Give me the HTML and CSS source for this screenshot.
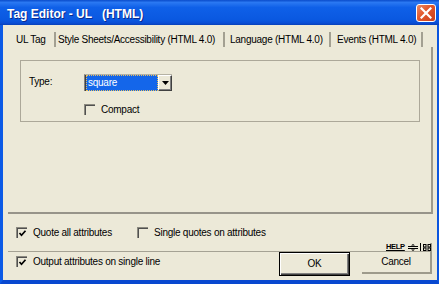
FILE: index.html
```html
<!DOCTYPE html>
<html>
<head>
<meta charset="utf-8">
<link rel="stylesheet" href="styles.css">
</head>
<body>
<div class="window">
  <div class="titlebar">
    <span class="title">Tag Editor - UL   (HTML)</span>
    <span class="close"><svg width="12" height="12" viewBox="0 0 12 12"><path d="M1.5 1.5 L10.5 10.5 M10.5 1.5 L1.5 10.5" stroke="#fff" stroke-width="2.2" stroke-linecap="square"/></svg></span>
  </div>
  <div class="frame">
    <div class="tabs">
      <span class="tab t1">UL Tag</span>
      <span class="tab t2">Style Sheets/Accessibility (HTML 4.0)</span>
      <span class="tab t3">Language (HTML 4.0)</span>
      <span class="tab t4">Events (HTML 4.0)</span>
    </div>
    <div class="panel">
      <div class="group">
        <div class="row1">
          <span class="label">Type:</span>
          <div class="select">
            <span class="field">square</span>
            <span class="ddbtn"><svg width="7" height="4" viewBox="0 0 7 4"><polygon points="0,0 7,0 3.5,4" fill="#000"/></svg></span>
          </div>
        </div>
        <div class="row2 chk">
          <span class="cb"></span><span>Compact</span>
        </div>
      </div>
    </div>
    <div class="opts">
      <div class="chk opt1"><span class="cb"><svg width="9" height="9" viewBox="0 0 9 9"><polyline points="1.5,4 3.5,6.2 7.5,1.8" fill="none" stroke="#000" stroke-width="1.7"/></svg></span><span>Quote all attributes</span></div>
      <div class="chk"><span class="cb"></span><span>Single quotes on attributes</span></div>
    </div>
    <div class="footer">
      <div class="helprow">
        <div class="hline"></div>
        <div class="help">
          <span class="helptext">HELP</span>
          <svg class="hicon" width="10" height="7" viewBox="0 0 10 7"><polygon points="5,0 3,1.5 7,1.5" fill="#000"/><rect x="0" y="2" width="10" height="1" fill="#000"/><rect x="0" y="4" width="10" height="1" fill="#000"/><polygon points="5,7 3,5.5 7,5.5" fill="#000"/></svg>
          <span class="gicon"><svg width="8" height="7" viewBox="0 0 8 7"><rect x="0.5" y="0.5" width="2.5" height="2.5" fill="none" stroke="#000" stroke-width="1"/><rect x="5" y="0.5" width="2.5" height="2.5" fill="none" stroke="#000" stroke-width="1"/><rect x="0.5" y="4" width="2.5" height="2.5" fill="none" stroke="#000" stroke-width="1"/><rect x="5" y="4" width="2.5" height="2.5" fill="none" stroke="#000" stroke-width="1"/></svg></span>
        </div>
      </div>
      <div class="btnrow">
        <div class="chk out"><span class="cb"><svg width="9" height="9" viewBox="0 0 9 9"><polyline points="1.5,4 3.5,6.2 7.5,1.8" fill="none" stroke="#000" stroke-width="1.7"/></svg></span><span>Output attributes on single line</span></div>
        <div class="ok">OK</div>
        <div class="cancel">Cancel</div>
      </div>
    </div>
  </div>
</div>
</body>
</html>
```
FILE: styles.css
```css
* { box-sizing: border-box; }
html, body { margin: 0; padding: 0; }
body {
  width: 439px;
  height: 284px;
  overflow: hidden;
  font-family: "Liberation Sans", Arial, sans-serif;
  font-size: 10px;
  letter-spacing: -0.25px;
  color: #000;
  background: #ECE9D8;
}
.window {
  width: 439px;
  height: 284px;
  display: flex;
  flex-direction: column;
}
.titlebar {
  height: 25px;
  flex: none;
  display: flex;
  align-items: center;
  justify-content: space-between;
  padding: 0 3px 0 7px;
  background: linear-gradient(#0A4CCB 0%, #2A78F2 10%, #0F60E8 30%, #0A58E0 80%, #0A4ED6 92%, #0840B8 100%);
}
.title {
  color: #fff;
  font-weight: bold;
  font-size: 12px;
  letter-spacing: 0;
  white-space: pre;
  margin-top: 2px;
  text-shadow: 1px 1px #0A2A8E;
}
.close {
  width: 20px;
  height: 18px;
  margin-top: 1px;
  border: 1px solid #fff;
  border-radius: 3px;
  background: linear-gradient(135deg, #E98A66 0%, #E2572B 45%, #C9401C 100%);
  display: flex;
  align-items: center;
  justify-content: center;
}
.frame {
  flex: 1;
  border-left: 3px solid #0B5AE6;
  border-right: 2px solid #0B55DE;
  border-bottom: 4px solid #0848D0;
  background: #ECE9D8;
  display: flex;
  flex-direction: column;
}
.tabs {
  height: 22px;
  flex: none;
  display: flex;
  padding-left: 13px;
}
.tab {
  height: 15px;
  margin-top: 7px;
  border-right: 2px solid #A3A092;
  line-height: 15px;
  white-space: nowrap;
  overflow: hidden;
}
.t1 { width: 40px; }
.t2 { width: 169px; padding-left: 2px; }
.t3 { width: 106px; padding-left: 5px; }
.t4 { width: 92px; padding-left: 6px; }
.panel {
  height: 167px;
  flex: none;
  margin-left: 5px;
  margin-right: 4px;
  border-right: 2px solid #9D9A8B;
  border-bottom: 2px solid #97948A;
  padding: 13px 0 0 12px;
}
.group {
  width: 400px;
  height: 62px;
  border: 1px solid #ACA899;
  padding: 13px 0 0 8px;
}
.row1 {
  display: flex;
  align-items: center;
  height: 17px;
}
.label { width: 55px; padding-bottom: 2px; }
.select {
  width: 88px;
  height: 17px;
  display: flex;
  border-top: 1px solid #B5B2A4;
  border-left: 1px solid #808080;
  box-shadow: inset 1px 0 #404040;
  padding-left: 1px;
}
.field {
  flex: 1;
  background: #1466EA;
  color: #fff;
  outline: 1px dotted #E8C060;
  outline-offset: -1px;
  padding-left: 2px;
  line-height: 15px;
}
.ddbtn {
  width: 14px;
  height: 16px;
  border: 1px solid;
  border-color: #fff #404040 #404040 #fff;
  box-shadow: inset -1px -1px #808080;
  background: #ECE9D8;
  display: flex;
  align-items: center;
  justify-content: center;
}
.row2 {
  margin-top: 13px;
  margin-left: 55px;
}
.chk {
  display: flex;
  align-items: center;
  gap: 6px;
  height: 11px;
  white-space: nowrap;
}
.cb {
  width: 11px;
  height: 11px;
  flex: none;
  border-top: 1px solid #8C8A80;
  border-left: 1px solid #8C8A80;
  box-shadow: inset 1px 1px #505050;
  display: flex;
  align-items: center;
  justify-content: center;
  padding: 1px 0 0 1px;
}
.opts {
  display: flex;
  padding: 13px 0 0 13px;
  flex: none;
}
.opt1 { width: 121px; }
.footer {
  margin: 5px 5px 0 5px;
  display: flex;
  flex-direction: column;
}
.helprow {
  height: 9px;
  display: flex;
}
.hline {
  flex: 1;
  border-bottom: 1px solid #A5A294;
}
.help {
  width: 47px;
  flex: none;
  display: flex;
  align-items: flex-start;
  border-right: 2px solid #9D9A8B;
  border-bottom: 1px solid #A5A294;
}
.helptext {
  font-size: 7.5px;
  font-weight: bold;
  letter-spacing: -0.3px;
  line-height: 8px;
  padding-left: 1px;
  text-decoration: underline;
  white-space: nowrap;
}
.hicon { flex: none; margin-left: 3px; margin-top: 1px; }
.gicon {
  flex: none;
  margin-left: 2px;
  padding-left: 2px;
  border-left: 1px solid #000;
  height: 8px;
  padding-top: 1px;
  display: flex;
}
.btnrow {
  display: flex;
  align-items: flex-start;
  height: 24px;
}
.out {
  margin-left: 8px;
  margin-top: 4px;
}
.ok {
  margin-left: auto;
  width: 71px;
  height: 24px;
  border: 1px solid #000;
  box-shadow: inset 1px 1px #fff, inset -1px -1px #404040, inset -2px -2px #808080;
  display: flex;
  align-items: center;
  justify-content: center;
  padding-bottom: 1px;
}
.cancel {
  margin-left: 12px;
  width: 70px;
  height: 22px;
  border-right: 2px solid #9D9A8B;
  border-bottom: 2px solid #9D9A8B;
  display: flex;
  align-items: center;
  justify-content: center;
  padding-bottom: 1px;
}
```
